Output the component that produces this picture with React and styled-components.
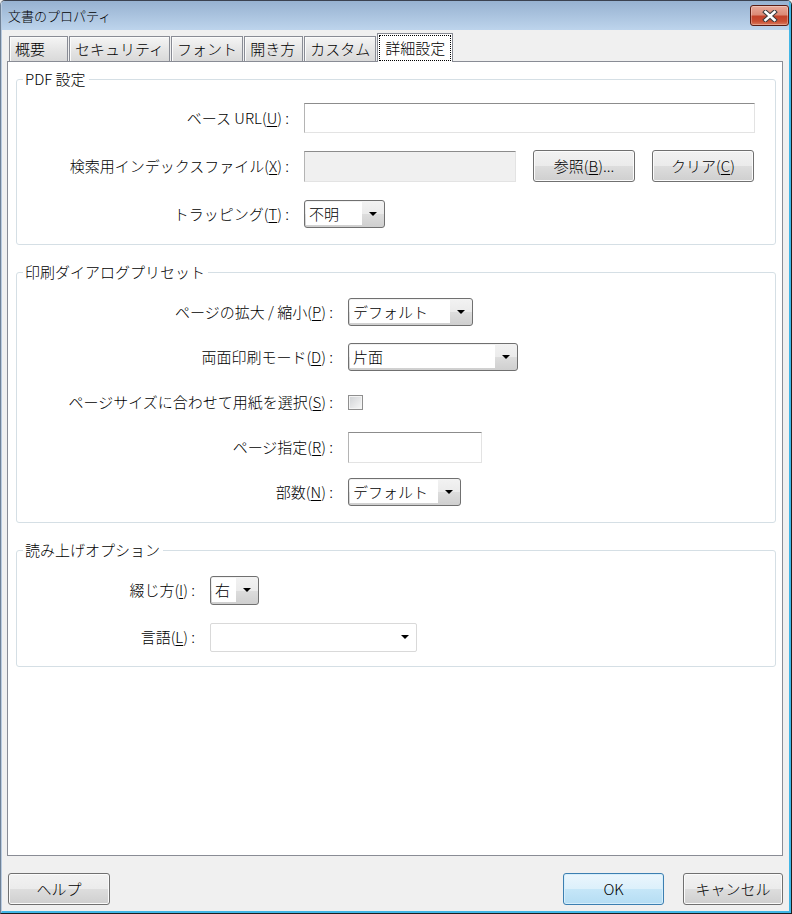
import React from "react";
import styled, { createGlobalStyle } from "styled-components";

const GlobalStyle = createGlobalStyle`
  * {
    box-sizing: border-box;
  }
  html, body {
    margin: 0;
    padding: 0;
    background: #f0f0f0;
  }
  body {
    font-family: "Noto Sans CJK JP", "Noto Sans", sans-serif;
    font-size: 15px;
    font-weight: 300;
    color: #000;
  }
`;

const Window = styled.div`
  width: 792px;
  height: 914px;
  display: flex;
  flex-direction: column;
  background: #f0f0f0;
  border-top: 1px solid #3b4250;
  border-right: 1px solid #1d1d1d;
  border-bottom: 1px solid #1d1d1d;
  border-left: 1px solid #6f8196;
  border-radius: 5px 5px 0 0;
  overflow: hidden;
`;

const Frame = styled.div`
  flex: 1;
  display: flex;
  flex-direction: column;
  min-height: 0;
  border-left: 1px solid #b9cbe0;
  border-right: 2px solid #41b6e6;
  border-bottom: 2px solid #41b6e6;
`;

const TitleBar = styled.div`
  flex: none;
  height: 29px;
  display: flex;
  align-items: center;
  justify-content: space-between;
  padding: 0 0 0 6px;
  background: linear-gradient(to bottom, #97b2d1, #bdd4ec);
`;

const Title = styled.span`
  font-size: 13px;
  line-height: 16px;
`;

const CloseButton = styled.button`
  width: 39px;
  height: 21px;
  padding: 0;
  display: flex;
  align-items: center;
  justify-content: center;
  border: 1px solid #5a1c13;
  border-radius: 3px;
  background: linear-gradient(
    to bottom,
    #e9aa9a 0%,
    #dc8b77 45%,
    #c4432a 55%,
    #c94e33 80%,
    #d97a5d 100%
  );
  box-shadow: inset 0 0 0 1px rgba(255, 255, 255, 0.3);
`;

const Body = styled.div`
  flex: 1;
  min-height: 0;
  display: flex;
  flex-direction: column;
  padding: 3px 6px 0 5px;
`;

const TabStrip = styled.div`
  flex: none;
  height: 29px;
  margin: 0 0 -1px 2px;
  display: flex;
  align-items: flex-end;
  position: relative;
  z-index: 1;
`;

const Tab = styled.div`
  height: ${p => (p.$active ? 29 : 25)}px;
  margin: 0 1px ${p => (p.$active ? 0 : 1)}px 0;
  min-width: ${p => (p.$active ? 0 : 59)}px;
  padding: ${p => (p.$active ? "0 1px" : "0 5px")};
  border: 1px solid #898c95;
  border-bottom: none;
  background: ${p =>
    p.$active
      ? "#fff"
      : "linear-gradient(to bottom, #f5f5f5, #e6e6e6 50%, #d9d9d9)"};
  box-shadow: ${p => (p.$active ? "none" : "inset 1px 1px 0 #fbfbfb")};
  line-height: 24px;
  white-space: nowrap;
`;

const FocusLabel = styled.span`
  display: block;
  height: 26px;
  margin-top: 1px;
  padding: 0 5px;
  border: 1px dotted #000;
  line-height: 24px;
`;

const Panel = styled.div`
  flex: 1;
  min-height: 0;
  display: flex;
  flex-direction: column;
  padding: 0 6px 0 8px;
  background: #fff;
  border: 1px solid #898c95;
`;

const Group = styled.fieldset`
  margin: ${p => (p.$first ? 7 : 17)}px 0 0;
  padding: 0;
  min-width: 0;
  border: 1px solid #d5dfe5;
  border-radius: 3px;
`;

const Legend = styled.legend`
  margin-left: 6px;
  padding: 0 3px 0 2px;
  line-height: 20px;
`;

const Rows = styled.div`
  display: grid;
  grid-template-columns: ${p => p.$labelWidth}px 1fr;
  grid-auto-rows: ${p => p.$rowHeight}px;
  column-gap: 15px;
  row-gap: ${p => p.$rowGap}px;
  align-items: center;
  padding: ${p => p.$padTop}px 0 ${p => p.$padBottom}px;
`;

const Label = styled.label`
  justify-self: end;
  white-space: nowrap;
  line-height: 20px;
`;

const Key = styled.span`
  text-decoration: underline;
  text-underline-offset: 2px;
`;

const Field = styled.div`
  display: flex;
  align-items: center;
  gap: 17px;
`;

const TextBox = styled.input`
  width: ${p => p.$w}px;
  height: ${p => p.$h || 30}px;
  margin: 0;
  padding: 0 4px;
  border: 1px solid #e3e3e3;
  border-top-color: #8c8c8c;
  border-left-color: #b4b4b4;
  border-radius: 0;
  background: ${p => (p.disabled ? "#f0f0f0" : "#fff")};
  font: inherit;
  outline: none;
`;

const buttonFace = "linear-gradient(to bottom, #f2f2f2 0%, #ebebeb 50%, #dddddd 51%, #cfcfcf 100%)";
const defaultFace = "linear-gradient(to bottom, #ebf6fd 0%, #dcf0fb 50%, #c5e6f8 51%, #b5ddf3 100%)";

const Button = styled.button`
  width: ${p => p.$w}px;
  height: 32px;
  margin: 0;
  padding: 0;
  border: 1px solid ${p => (p.$default ? "#3c7fb1" : "#707070")};
  border-radius: 3px;
  background: ${p => (p.$default ? defaultFace : buttonFace)};
  box-shadow: inset 0 0 0 1px ${p => (p.$default ? "#d6eefb" : "#fbfbfb")};
  font: inherit;
  line-height: 20px;
  color: #000;
  margin-left: ${p => (p.$push ? "auto" : "0")};
`;

const Combo = styled.div`
  width: ${p => p.$w}px;
  height: ${p => p.$h || 28}px;
  display: flex;
  border: 1px solid ${p => (p.$flat ? "#d9d9d9" : "#707070")};
  border-radius: ${p => (p.$flat ? 2 : 3)}px;
  background: ${p => (p.$flat ? "#fff" : buttonFace)};
  overflow: hidden;
`;

const ComboValue = styled.span`
  flex: 1;
  margin: 1px 0 2px 1px;
  padding-left: 3px;
  background: #fff;
  line-height: 23px;
  white-space: nowrap;
`;

const ComboArrow = styled.span`
  flex: none;
  width: 22px;
  display: flex;
  align-items: center;
  justify-content: center;

  &::after {
    content: "";
    border-left: 4px solid transparent;
    border-right: 4px solid transparent;
    border-top: 4px solid #000;
  }
`;

const CheckBox = styled.span`
  display: block;
  width: 15px;
  height: 15px;
  border: 1px solid #8f8f8f;
  background: linear-gradient(135deg, #cfd1d4, #f8f8f8);
  box-shadow: inset 0 0 0 1px #f4f4f4;
`;

const Footer = styled.div`
  flex: none;
  display: flex;
  align-items: center;
  gap: 19px;
  padding: 17px 0 6px 1px;
`;

const tabs = ["概要", "セキュリティ", "フォント", "開き方", "カスタム", "詳細設定"];

const Select = ({ w, h, flat, value }) => (
  <Combo $w={w} $h={h} $flat={flat}>
    <ComboValue>{value}</ComboValue>
    <ComboArrow />
  </Combo>
);

const CloseGlyph = () => (
  <svg width="16" height="12" viewBox="0 0 16 12">
    <path d="M3.5 2 L12.5 10 M12.5 2 L3.5 10" stroke="#3d3d3d" strokeWidth="4.6" strokeLinecap="square" fill="none" />
    <path d="M3.5 2 L12.5 10 M12.5 2 L3.5 10" stroke="#fff" strokeWidth="2.6" strokeLinecap="square" fill="none" />
  </svg>
);

const App = () => (
  <>
    <GlobalStyle />
    <Window>
      <Frame>
        <TitleBar>
          <Title>文書のプロパティ</Title>
          <CloseButton aria-label="閉じる">
            <CloseGlyph />
          </CloseButton>
        </TitleBar>

        <Body>
          <TabStrip>
            {tabs.map(tab =>
              tab === "詳細設定" ? (
                <Tab key={tab} $active>
                  <FocusLabel>{tab}</FocusLabel>
                </Tab>
              ) : (
                <Tab key={tab}>{tab}</Tab>
              )
            )}
          </TabStrip>

          <Panel>
            <Group $first>
              <Legend>PDF 設定</Legend>
              <Rows $labelWidth={272} $rowHeight={32} $rowGap={16} $padTop={13} $padBottom={14}>
                <Label>
                  ベース URL(<Key>U</Key>) :
                </Label>
                <Field>
                  <TextBox $w={451} />
                </Field>

                <Label>
                  検索用インデックスファイル(<Key>X</Key>) :
                </Label>
                <Field>
                  <TextBox $w={212} $h={31} disabled />
                  <Button $w={102}>
                    参照(<Key>B</Key>)...
                  </Button>
                  <Button $w={102}>
                    クリア(<Key>C</Key>)
                  </Button>
                </Field>

                <Label>
                  トラッピング(<Key>T</Key>) :
                </Label>
                <Field>
                  <Select w={81} value="不明" />
                </Field>
              </Rows>
            </Group>

            <Group>
              <Legend>印刷ダイアログプリセット</Legend>
              <Rows $labelWidth={316} $rowHeight={30} $rowGap={15} $padTop={15} $padBottom={15}>
                <Label>
                  ページの拡大 / 縮小(<Key>P</Key>) :
                </Label>
                <Field>
                  <Select w={125} value="デフォルト" />
                </Field>

                <Label>
                  両面印刷モード(<Key>D</Key>) :
                </Label>
                <Field>
                  <Select w={170} value="片面" />
                </Field>

                <Label>
                  ページサイズに合わせて用紙を選択(<Key>S</Key>) :
                </Label>
                <Field>
                  <CheckBox />
                </Field>

                <Label>
                  ページ指定(<Key>R</Key>) :
                </Label>
                <Field>
                  <TextBox $w={134} $h={31} />
                </Field>

                <Label>
                  部数(<Key>N</Key>) :
                </Label>
                <Field>
                  <Select w={113} value="デフォルト" />
                </Field>
              </Rows>
            </Group>

            <Group>
              <Legend>読み上げオプション</Legend>
              <Rows $labelWidth={178} $rowHeight={30} $rowGap={17} $padTop={15} $padBottom={14}>
                <Label>
                  綴じ方(<Key>I</Key>) :
                </Label>
                <Field>
                  <Select w={49} h={29} value="右" />
                </Field>

                <Label>
                  言語(<Key>L</Key>) :
                </Label>
                <Field>
                  <Select w={207} h={29} flat value="" />
                </Field>
              </Rows>
            </Group>
          </Panel>

          <Footer>
            <Button $w={102}>ヘルプ</Button>
            <Button $w={101} $default $push>
              OK
            </Button>
            <Button $w={100}>キャンセル</Button>
          </Footer>
        </Body>
      </Frame>
    </Window>
  </>
);

export default App;
